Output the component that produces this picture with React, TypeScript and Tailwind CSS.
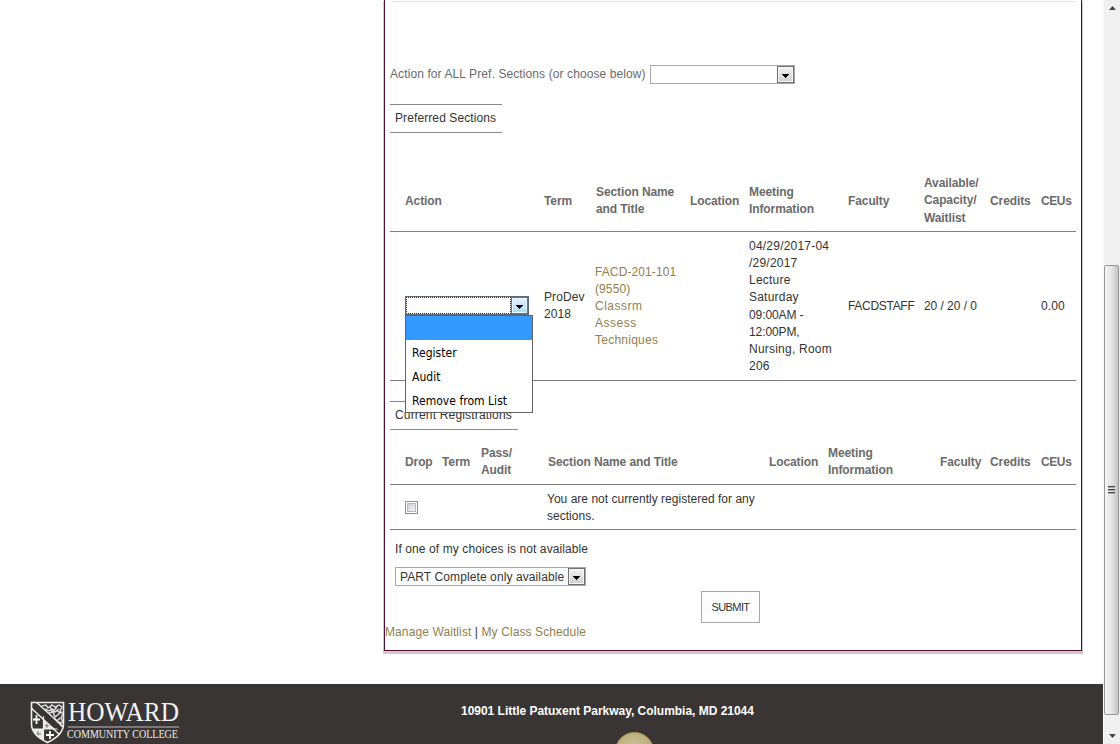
import type { ReactNode } from 'react'

function ArrowButton({ active = false }: { active?: boolean }) {
  return (
    <span
      className={
        active
          ? 'flex h-[17px] w-[17px] shrink-0 items-center justify-center border border-[#3c7fb1] bg-linear-to-b from-[#e3f4fc] to-[#a9daf3] pt-[3px] shadow-[inset_0_0_0_1px_#e8f6fd]'
          : 'flex h-[17px] w-[17px] shrink-0 items-center justify-center border border-[#707070] bg-linear-to-b from-[#f2f2f2] to-[#cfcfcf] pt-[3px] shadow-[inset_0_0_0_1px_#f8f8f8]'
      }
    >
      <svg width="7" height="4" viewBox="0 0 7 4" shapeRendering="crispEdges">
        <path d="M0 0H7V1H6V2H5V3H4V4H3V3H2V2H1V1H0Z" fill="#000" />
      </svg>
    </span>
  )
}

function Legend({ children, className }: { children: ReactNode; className: string }) {
  return (
    <div className={`flex h-[29px] items-center border-y border-[#8a8a8a] pl-[5px] ${className}`}>
      {children}
    </div>
  )
}

const options = ['', 'Register', 'Audit', 'Remove from List']

function ActionSelect() {
  return (
    <div className="relative mb-[2px] h-[19px] w-[124px]">
      <div className="flex h-[19px] w-[124px] border border-[#5b6b78] bg-white">
        <div className="flex-1 border border-dotted border-[#333]" />
        <ArrowButton active />
      </div>
      <div className="absolute top-[19px] left-0 z-10 w-[128px] border border-[#646464] bg-white font-['DejaVu_Sans_Condensed','DejaVu_Sans',sans-serif] text-[12px] tracking-[0.03px] text-black">
        {options.map((o, i) => (
          <div
            key={o}
            className={i === 0 ? 'h-6 bg-[#3399ff]' : 'flex h-6 items-center pt-[3px] pl-[6px]'}
          >
            {o}
          </div>
        ))}
      </div>
    </div>
  )
}

function Logo() {
  return (
    <svg className="ml-[30px] shrink-0" width="190" height="60" viewBox="0 -17 190 60">
      <clipPath id="shield">
        <path d="M1.500 1.500H33.500V23C33.500 31 27 37 17.500 41.500C8 37 1.500 31 1.500 23Z" />
      </clipPath>
      <g clipPath="url(#shield)">
        <path d="M1 8L36 40V43H1Z" fill="#393535" />
        <path d="M13 18L25 28H13ZM1 28H13V43H1Z" fill="#e9e9e9" />
        <path d="M13.500 15V42M1 28H28" stroke="#eee" strokeWidth="1.200" />
        <path d="M6.500 14v9M3 18.500h7M20 30v8M16 34h8" stroke="#fff" strokeWidth="1.800" />
        <path d="M17 21v6M15 24.500h5M8 30v6M5 33h6" stroke="#777" strokeWidth="1" />
        <path
          d="M12 5l4-1 2 3 4-3 3 2 4-2 3 2-2 4 3 3-2 4 2 4-3 2 2 4M15 8l4 2 3-2 3 3 4-3M19 12l4-1 2 5 5-4-4-3M24 17l3 3 3-3M27 22l4-1M20 5l2 6 5-5"
          fill="none"
          stroke="#d8d8d8"
          strokeWidth="1.500"
        />
        <path d="M5 0L38 30M-2 4L32 36" stroke="#eee" strokeWidth="1.400" />
        <path d="M1 1L34 31" stroke="#393535" strokeWidth="4" />
      </g>
      <path d="M1.500 1.500H33.500V23C33.500 31 27 37 17.500 41.500C8 37 1.500 31 1.500 23Z" fill="none" stroke="#eee" strokeWidth="1.600" />
      <text x="38" y="20" textLength="111" lengthAdjust="spacingAndGlyphs" fill="#f2f2f2" className="font-['Liberation_Serif',serif] text-[27px] leading-none tracking-normal">HOWARD</text>
      <path d="M38 26H149" stroke="#bbb" />
      <text x="37" y="36.700" textLength="111" lengthAdjust="spacingAndGlyphs" fill="#eee" className="font-['Liberation_Serif',serif] text-[11.500px] leading-none tracking-normal">COMMUNITY COLLEGE</text>
    </svg>
  )
}

export default function App() {
  return (
    <div className="flex h-[744px] w-[1120px] overflow-hidden bg-white font-['Liberation_Sans',Arial,sans-serif] text-[12px] leading-[17.150px] tracking-[0.1px] text-[#333]">
      <div className="flex w-[1103px] flex-col">
        <main className="ml-[384px] h-[651px] w-[698px] shrink-0 border-x border-b border-[#4f0f30] shadow-[0_2px_0_1px_#d2c6cc]">
          <div className="ml-[5px] flex w-[686px] flex-col pt-px">
            <div className="h-px bg-[#e6e6e6]" />
            <div className="mt-[63px] flex h-[19px] items-center text-[#6b6b6b]">
              <span className="w-[260px] whitespace-nowrap">Action for ALL Pref. Sections (or choose below)</span>
              <div className="flex h-[19px] w-[145px] justify-end border border-[#a9a9a9]">
                <ArrowButton />
              </div>
            </div>
            <Legend className="mt-5 w-[112px]">Preferred Sections</Legend>

            <div className="mt-[37px] grid h-[62px] grid-cols-[154px_51px_95px_59px_99px_76px_66px_51px_35px] items-center border-b border-[#808080] pt-px font-bold tracking-[-0.1px] text-[#6b6b6b]">
              <div className="pt-px pl-[15px]">Action</div>
              <div className="pt-px">Term</div>
              <div className="pl-px">Section Name<br />and Title</div>
              <div className="pt-px">Location</div>
              <div>Meeting<br />Information</div>
              <div className="pt-px">Faculty</div>
              <div>Available/<br />Capacity/<br />Waitlist</div>
              <div className="pt-px">Credits</div>
              <div className="pt-px tracking-[-0.4px]">CEUs</div>
            </div>
            <div className="grid h-[149px] grid-cols-[154px_51px_95px_59px_99px_76px_66px_51px_35px] items-center border-b border-[#808080] pt-px">
              <div className="pl-[15px]"><ActionSelect /></div>
              <div className="pb-px">ProDev<br />2018</div>
              <div className="text-[#91804d]">FACD-201-101<br />(9550)<br /><span className="tracking-[0.5px]">Classrm<br />Assess</span><br /><span className="tracking-[0.25px]">Techniques</span></div>
              <div />
              <div className="tracking-[0.22px]">04/29/2017-04<br />/29/2017<br />Lecture<br />Saturday<br /><span className="tracking-[-0.1px]">09:00AM -<br />12:00PM,</span><br />Nursing, Room<br />206</div>
              <div className="tracking-[-0.3px]">FACDSTAFF</div>
              <div className="tracking-[-0.05px]">20 / 20 / 0</div>
              <div />
              <div>0.00</div>
            </div>

            <Legend className="mt-5 w-[128px] tracking-[0.17px]">Current Registrations</Legend>
            <div className="grid h-[55px] grid-cols-[52px_39px_66px_222px_59px_112px_50px_51px_35px] items-center border-b border-[#808080] pt-[10px] font-bold tracking-[-0.1px] text-[#6b6b6b]">
              <div className="pt-px pl-[15px]">Drop</div>
              <div className="pt-px">Term</div>
              <div>Pass/<br />Audit</div>
              <div className="pt-px pl-px">Section Name and Title</div>
              <div className="pt-px">Location</div>
              <div>Meeting<br />Information</div>
              <div className="pt-px">Faculty</div>
              <div className="pt-px">Credits</div>
              <div className="pt-px tracking-[-0.4px]">CEUs</div>
            </div>
            <div className="grid h-[45px] grid-cols-[157px_529px] items-center border-b border-[#808080]">
              <div className="pl-[15px]">
                <div className="h-[13px] w-[13px] border border-[#8e8f8f] bg-white p-px">
                  <div className="h-full w-full border border-[#b5b9be] bg-linear-to-br from-[#cbcfd5] to-[#f3f3f3]" />
                </div>
              </div>
              <div className="pt-[2px] tracking-[0.02px]">You are not currently registered for any<br />sections.</div>
            </div>

            <div className="flex h-[37px] items-center pt-[2px] pl-[5px]">If one of my choices is not available</div>
            <div className="ml-[5px] flex h-[19px] w-[191px] items-center border border-[#a9a9a9] pl-[4px]">
              <span className="flex-1 pt-[2px] whitespace-nowrap">PART Complete only available</span>
              <ArrowButton />
            </div>
            <button className="mt-[5px] ml-[311px] h-8 w-[59px] border border-[#a9a9a9] bg-[#fdfdfd] pt-[2px] text-[11px] tracking-[-0.6px]">SUBMIT</button>
          </div>
          <div className="pt-px text-[#91804d]">
            <span>Manage Waitlist</span>
            <span className="text-[#333]"> | </span>
            <span>My Class Schedule</span>
          </div>
        </main>

        <footer className="relative mt-[33px] flex h-[60px] shrink-0 overflow-hidden bg-[#393535]">
          <Logo />
          <div className="mt-[19px] ml-[241px] font-bold tracking-[-0.02px] whitespace-nowrap text-white">10901 Little Patuxent Parkway, Columbia, MD 21044</div>
          <div className="absolute top-[48px] left-[615px] h-[39px] w-[39px] rounded-full border border-[#b09a50] bg-radial from-[#d0c8a8] to-[#b5a468]" />
        </footer>
      </div>

      <aside className="flex w-[17px] flex-col items-start border-l border-[#fcfcfc] bg-[#f0f0f0]">
        <div className="h-[265px] pt-[6px] pl-[5px]">
          <svg width="7" height="4" viewBox="0 0 7 4"><path d="M3.500 0L7 4H0Z" fill="#444" /></svg>
        </div>
        <div className="flex h-[450px] w-[15px] flex-col items-center justify-center gap-px rounded-[2px] border border-[#979797] bg-linear-to-r from-[#f5f5f5] via-[#e5e5e5] to-[#c4c4c4]">
          <div className="h-[2px] w-[7px] border-t border-[#444] bg-[#aaa]" />
          <div className="h-[2px] w-[7px] border-t border-[#444] bg-[#aaa]" />
          <div className="h-[2px] w-[7px] border-t border-[#444] bg-[#aaa]" />
        </div>
        <div className="pt-[19px] pl-[5px]">
          <svg width="7" height="4" viewBox="0 0 7 4"><path d="M0 0H7L3.500 4Z" fill="#444" /></svg>
        </div>
      </aside>
    </div>
  )
}
